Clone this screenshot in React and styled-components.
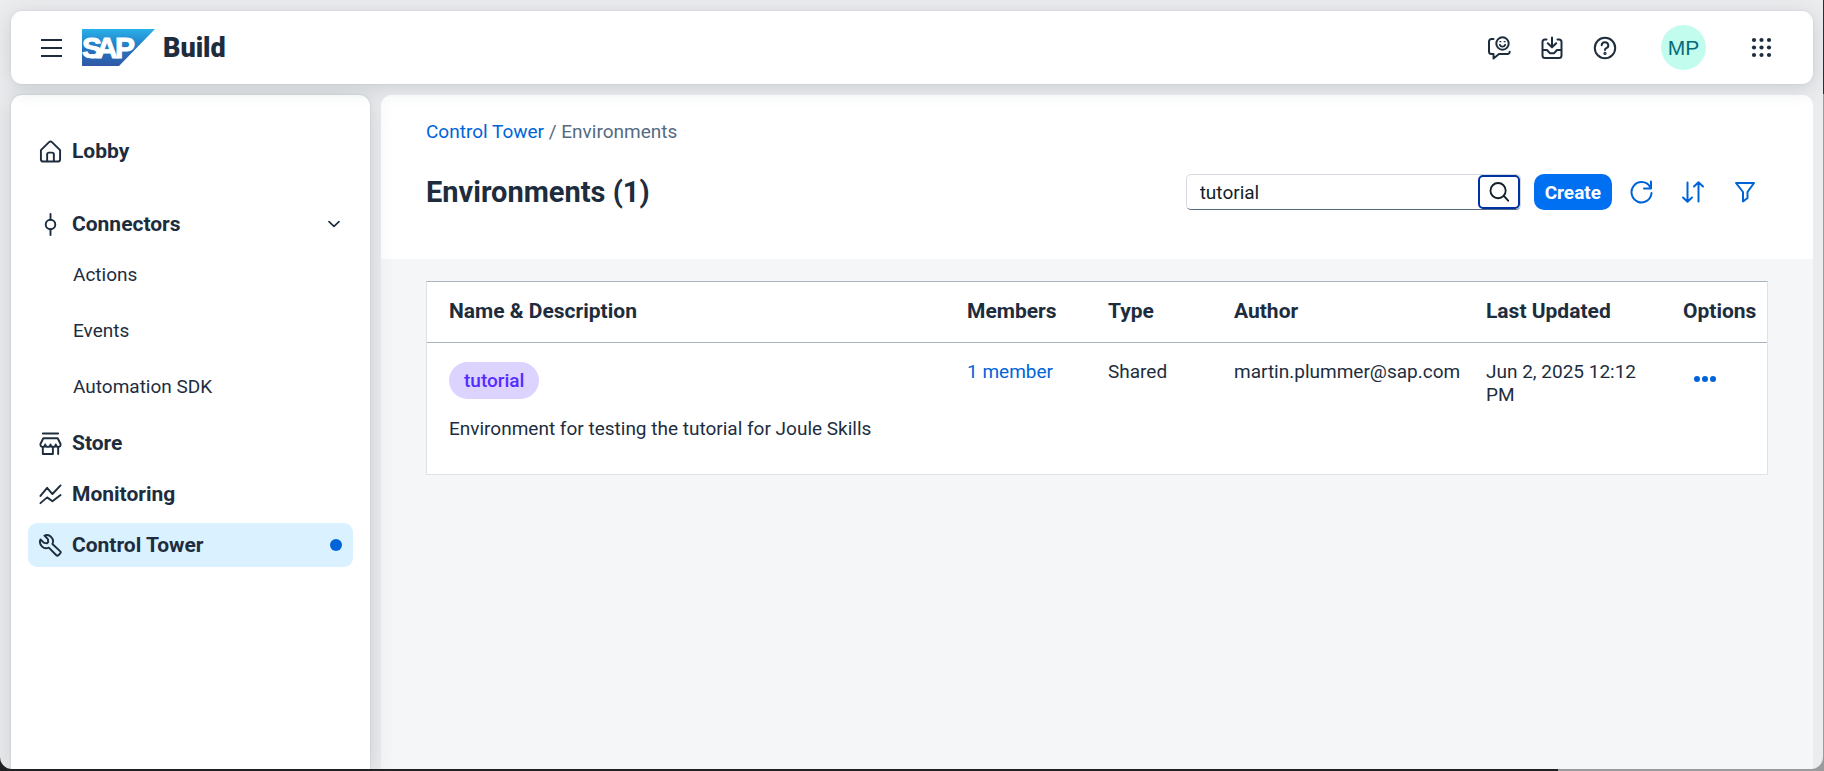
import React from "react";
import styled, { createGlobalStyle, css } from "styled-components";

const ink = "#1d2d3e";
const blue = "#0064d9";

const GlobalStyle = createGlobalStyle`
  *, *::before, *::after { box-sizing: border-box; }
  body {
    margin: 0;
    color: ${ink};
    font-family: Roboto, "Liberation Sans", sans-serif;
    font-size: 19px;
    line-height: 23px;
  }
  h1, p, ul { margin: 0; padding: 0; }
  ul { list-style: none; }
  a { text-decoration: none; }
  button, input { font: inherit; color: inherit; }
`;

const Desktop = styled.div`
  min-height: 100vh;
  display: flex;
  padding: 0 1px 2px 0;
  background:
    linear-gradient(#2c2e2f, #2c2e2f) right top / 1px 94px no-repeat,
    linear-gradient(to right, #1f2122 85.4%, #9a9b9c 85.4%);
`;

const AppWindow = styled.div`
  flex: 1;
  min-width: 0;
  display: flex;
  flex-direction: column;
  gap: 11px;
  padding: 11px 10px 0 11px;
  background: #ebecee;
  border-radius: 0 0 12px 12px;
  overflow: hidden;
`;

const ShellBar = styled.header`
  position: relative;
  z-index: 2;
  display: flex;
  align-items: center;
  height: 73px;
  padding: 0 39px 0 29px;
  background: #fff;
  border-radius: 11px;
  box-shadow: 0 0 2px rgba(34, 53, 72, 0.12), 0 4px 20px rgba(34, 53, 72, 0.16);
`;

const IconButton = styled.button`
  display: flex;
  align-items: center;
  justify-content: center;
  width: 24px;
  height: 24px;
  padding: 0;
  border: 0;
  background: none;
  color: ${({ $accent }) => ($accent ? blue : ink)};
  cursor: pointer;
`;

const Brand = styled.a`
  display: flex;
  align-items: center;
  gap: 8px;
  margin-left: 18px;
  color: ${ink};
  font-size: 27px;
  line-height: 32px;
  font-weight: 900;
`;

const ShellActions = styled.div`
  display: flex;
  align-items: center;
  gap: 29px;
  margin-left: auto;
`;

const Avatar = styled.button`
  width: 45px;
  height: 45px;
  margin: 0 15px;
  padding: 0;
  border: 0;
  border-radius: 50%;
  background: #c2fcee;
  color: #046c7a;
  font-family: "Liberation Sans", sans-serif;
  font-size: 21px;
`;

const Body = styled.div`
  flex: 1;
  display: flex;
  gap: 11px;
`;

const Sidebar = styled.nav`
  position: relative;
  z-index: 1;
  flex: none;
  width: 359px;
  padding: 34px 17px 24px;
  background: #fff;
  border-radius: 11px 11px 0 0;
  box-shadow: 0 0 2px rgba(34, 53, 72, 0.2), 0 4px 24px rgba(34, 53, 72, 0.16);
`;

const NavList = styled.ul`
  display: flex;
  flex-direction: column;
  gap: 7px;
`;

const NavItem = styled.li`
  ${({ $spaced }) => $spaced && css`margin-bottom: 22px;`}
`;

const NavLink = styled.a`
  display: flex;
  align-items: center;
  gap: 10px;
  height: 44px;
  padding: 0 11px;
  border-radius: 9px;
  color: ${ink};
  font-size: 21px;
  font-weight: 700;
  background: ${({ $active }) => ($active ? "#daf1ff" : "transparent")};
  svg { flex: none; }
`;

const NavEnd = styled.span`
  display: flex;
  margin-left: auto;
`;

const ActiveDot = styled.span`
  width: 12px;
  height: 12px;
  border-radius: 50%;
  background: ${blue};
`;

const SubLink = styled.a`
  display: flex;
  align-items: center;
  height: 56px;
  padding-left: 45px;
  color: ${ink};
`;

const Main = styled.main`
  flex: 1;
  min-width: 0;
  background: #f5f6f7;
  border-radius: 11px 11px 0 0;
  overflow: hidden;
`;

const PageHeader = styled.div`
  padding: 25px 56px 49px 45px;
  background: #fff;
`;

const Breadcrumb = styled.nav`
  color: #556b82;
`;

const Link = styled.a`
  color: ${blue};
`;

const TitleRow = styled.div`
  display: flex;
  align-items: center;
  margin-top: 31px;
`;

const Title = styled.h1`
  font-size: 29px;
  line-height: 36px;
  font-weight: 700;
`;

const Toolbar = styled.div`
  display: flex;
  align-items: center;
  gap: 28px;
  margin-left: auto;
`;

const ToolbarMain = styled.form`
  display: flex;
  gap: 13px;
  margin-right: -11px;
`;

const SearchField = styled.div`
  display: flex;
  width: 335px;
  height: 36px;
  border: 1px solid #d5dae0;
  border-bottom-color: #556b82;
  border-radius: 5px;
  background: #fff;
`;

const SearchInput = styled.input`
  flex: 1;
  min-width: 0;
  padding: 0 13px;
  border: 0;
  outline: 0;
  background: none;
  color: #131e29;
`;

const SearchButton = styled.button`
  display: flex;
  align-items: center;
  justify-content: center;
  width: 42px;
  padding: 0;
  border: 2px solid #0032a5;
  border-radius: 5px;
  background: #fff;
  color: #131e29;
`;

const CreateButton = styled.button`
  height: 36px;
  padding: 0 11px;
  border: 0;
  border-radius: 10px;
  background: #0070f2;
  color: #fff;
  font-weight: 700;
`;

const TableArea = styled.section`
  padding: 22px 45px 24px;
`;

const Table = styled.table`
  width: 100%;
  table-layout: fixed;
  border-collapse: separate;
  border-spacing: 0;
  background: #fff;
  border: 1px solid #dfe3e6;
  border-top-color: #a8b3bf;
  text-align: left;
`;

const HeadCell = styled.th`
  width: ${({ $width }) => ($width ? `${$width}px` : "auto")};
  height: 61px;
  padding: 0 0 1px 12px;
  border-bottom: 1px solid #a8b3bf;
  font-size: 21px;
  font-weight: 700;
  &:first-child { padding-left: 22px; }
`;

const Cell = styled.td`
  padding: 17px 12px 34px;
  vertical-align: top;
  &:first-child { padding: 19px 12px 34px 22px; }
`;

const Tag = styled.span`
  display: inline-flex;
  align-items: center;
  height: 37px;
  padding: 0 15px;
  border-radius: 19px;
  background: #dcd3ff;
  color: #552cff;
  font-weight: 500;
`;

const Description = styled.p`
  margin-top: 18px;
`;

const RowMenu = styled(IconButton)`
  margin: 7px 0 0 10px;
`;

const Icon = ({ size = 24, width = 2, children }) => (
  <svg width={size} height={size} viewBox="0 0 24 24" fill="none" stroke="currentColor"
    strokeWidth={width} strokeLinecap="round" strokeLinejoin="round" aria-hidden="true">
    {children}
  </svg>
);

const MenuIcon = () => <Icon><path d="M1 4h21M1 12h21M1 20h21" strokeLinecap="butt" /></Icon>;
const FeedbackIcon = () => (
  <Icon>
    <path d="M6.500 3H4.500a2.500 2.500 0 0 0-2.500 2.500v10a2.500 2.500 0 0 0 2.500 2.500h2v4.500l5.500-4.500h8.500a2.200 2.200 0 0 0 2.200-2.200" />
    <circle cx="15.500" cy="7.500" r="6.200" />
    <path d="M12.800 8.800a2.900 2.900 0 0 0 5.400 0" strokeWidth="1.800" />
    <path d="M13 5.700h.8M17.200 5.700h.8" strokeWidth="1.300" />
  </Icon>
);
const InboxIcon = () => (
  <Icon>
    <path d="M6.500 3.500H5a2.500 2.500 0 0 0-2.500 2.500v13.500A2.500 2.500 0 0 0 5 22h14a2.500 2.500 0 0 0 2.500-2.500V6A2.500 2.500 0 0 0 19 3.500h-1.500" />
    <path d="M12 1.500v9M7.800 7.200l4.200 4 4.200-4M3 14h4l2.800 3.200h4.400L17 14h4" />
  </Icon>
);
const HelpIcon = () => (
  <Icon>
    <circle cx="12" cy="12" r="10.200" />
    <path d="M8.700 9.200a3.300 3.100 0 1 1 4.700 3c-.9.400-1.400 1-1.400 1.700" />
    <circle cx="12" cy="17.400" r=".6" />
  </Icon>
);
const GridIcon = () => (
  <Icon>
    {[4, 11.500, 19].map((y) =>
      [4, 11.500, 19].map((x) => (
        <circle key={`${x}-${y}`} cx={x} cy={y} r="2.100" fill="currentColor" stroke="none" />
      ))
    )}
  </Icon>
);
const HomeIcon = () => (
  <Icon size={23}>
    <path d="M2 10.500 10.500 2.200a2.200 2.200 0 0 1 3 0L22 10.500V20a2.500 2.500 0 0 1-2.500 2.500h-15A2.500 2.500 0 0 1 2 20z" />
    <path d="M8.500 22v-7a1.800 1.800 0 0 1 1.800-1.800h3.400a1.800 1.800 0 0 1 1.800 1.800v7" />
  </Icon>
);
const ConnectorIcon = () => (
  <Icon size={23}><circle cx="12" cy="12" r="5" /><path d="M12 1v6M12 17v6" /></Icon>
);
const ChevronIcon = () => <Icon size={16} width={2.5}><path d="m4.500 8.500 7.500 7 7.500-7" /></Icon>;
const StoreIcon = () => (
  <Icon size={23}>
    <path d="M4 1.500h16M4.500 6.500h15l3 6c.3 1.800-.8 3-2.300 3-1.500 0-2.700-1-2.700-2.500 0 1.500-1.200 2.500-2.700 2.500S12 14.500 12 13c0 1.500-1.300 2.500-2.800 2.500S6.500 14.500 6.500 13c0 1.500-1.200 2.500-2.700 2.500-1.500 0-2.600-1.200-2.300-3z" />
    <path d="M4 15.500V23h10.500v-7.500M20 15.500V23" />
  </Icon>
);
const MonitoringIcon = () => (
  <Icon size={23}><path d="m1.500 13.500 7-8.500 5.500 6.500L22.500 2.500M1.500 21l7-6 5.500 4 8.500-6.500" /></Icon>
);
const WrenchIcon = () => (
  <Icon size={23}>
    <path d="m10.200 14.200 7.900 8a1.500 1.500 0 0 0 2.100 0l2-2a1.500 1.500 0 0 0 0-2.100L14 10.400A6.500 6.500 0 0 0 5.700 1.600l3.600 3.700.3 3-1.300 1.300-3-.3L1.600 5.700A6.500 6.500 0 0 0 10.200 14.200z" />
  </Icon>
);
const SearchIcon = () => <Icon size={22}><circle cx="11" cy="10.500" r="8.300" /><path d="m17.500 16.500 4.500 5" /></Icon>;
const RefreshIcon = () => (
  <Icon><path d="M20.800 6.500A10 10.200 0 1 0 22.500 13M22 1.500v7h-7" /></Icon>
);
const SortIcon = () => (
  <Icon><path d="M6.500 2.500v19M2 17.500l4.500 4.300 4.500-4.300M17.500 21.500v-19M13 6.500l4.500-4.300L22 6.500" /></Icon>
);
const FilterIcon = () => (
  <Icon><path d="M3 3h18l-6.500 9v6L10 21.500V12z" /></Icon>
);
const MoreIcon = () => (
  <Icon>
    {[4, 12, 20].map((x) => <circle key={x} cx={x} cy="12" r="3" fill="currentColor" stroke="none" />)}
  </Icon>
);

const SapLogo = () => (
  <svg width="73" height="37" viewBox="0 0 73 37" role="img" aria-label="SAP">
    <defs>
      <linearGradient id="sapBlue" x1="0" y1="0" x2="0" y2="1">
        <stop offset="0" stopColor="#29b1e8" />
        <stop offset="0.5" stopColor="#2378c3" />
        <stop offset="1" stopColor="#3157a5" />
      </linearGradient>
    </defs>
    <path d="M0 0h73L37 37H0z" fill="url(#sapBlue)" />
    <text x="0 14 33" y="29" fill="#fff" stroke="#fff" fontFamily="Liberation Sans, sans-serif"
      fontWeight="700" fontSize="30">SAP</text>
  </svg>
);

const subLinks = ["Actions", "Events", "Automation SDK"];

export default function App() {
  return (
    <>
      <GlobalStyle />
      <Desktop>
        <AppWindow>
          <ShellBar>
            <IconButton aria-label="Menu"><MenuIcon /></IconButton>
            <Brand href="#home"><SapLogo />Build</Brand>
            <ShellActions>
              <IconButton aria-label="Feedback"><FeedbackIcon /></IconButton>
              <IconButton aria-label="Inbox"><InboxIcon /></IconButton>
              <IconButton aria-label="Help"><HelpIcon /></IconButton>
              <Avatar aria-label="Profile">MP</Avatar>
              <IconButton aria-label="Products"><GridIcon /></IconButton>
            </ShellActions>
          </ShellBar>
          <Body>
            <Sidebar aria-label="Main">
              <NavList>
                <NavItem $spaced><NavLink href="#lobby"><HomeIcon />Lobby</NavLink></NavItem>
                <NavItem>
                  <NavLink href="#connectors">
                    <ConnectorIcon />Connectors<NavEnd><ChevronIcon /></NavEnd>
                  </NavLink>
                  <ul>
                    {subLinks.map((name) => (
                      <li key={name}><SubLink href="#connectors">{name}</SubLink></li>
                    ))}
                  </ul>
                </NavItem>
                <NavItem><NavLink href="#store"><StoreIcon />Store</NavLink></NavItem>
                <NavItem><NavLink href="#monitoring"><MonitoringIcon />Monitoring</NavLink></NavItem>
                <NavItem>
                  <NavLink href="#control-tower" $active aria-current="page">
                    <WrenchIcon />Control Tower<NavEnd><ActiveDot /></NavEnd>
                  </NavLink>
                </NavItem>
              </NavList>
            </Sidebar>
            <Main>
              <PageHeader>
                <Breadcrumb aria-label="Breadcrumb">
                  <Link href="#control-tower">Control Tower</Link> / Environments
                </Breadcrumb>
                <TitleRow>
                  <Title>Environments (1)</Title>
                  <Toolbar>
                    <ToolbarMain onSubmit={(e) => e.preventDefault()}>
                      <SearchField>
                        <SearchInput aria-label="Search" defaultValue="tutorial" />
                        <SearchButton aria-label="Search"><SearchIcon /></SearchButton>
                      </SearchField>
                      <CreateButton type="button">Create</CreateButton>
                    </ToolbarMain>
                    <IconButton $accent aria-label="Refresh"><RefreshIcon /></IconButton>
                    <IconButton $accent aria-label="Sort"><SortIcon /></IconButton>
                    <IconButton $accent aria-label="Filter"><FilterIcon /></IconButton>
                  </Toolbar>
                </TitleRow>
              </PageHeader>
              <TableArea>
                <Table>
                  <thead>
                    <tr>
                      <HeadCell>Name &amp; Description</HeadCell>
                      <HeadCell $width={141}>Members</HeadCell>
                      <HeadCell $width={126}>Type</HeadCell>
                      <HeadCell $width={252}>Author</HeadCell>
                      <HeadCell $width={197}>Last Updated</HeadCell>
                      <HeadCell $width={96}>Options</HeadCell>
                    </tr>
                  </thead>
                  <tbody>
                    <tr>
                      <Cell>
                        <Tag>tutorial</Tag>
                        <Description>Environment for testing the tutorial for Joule Skills</Description>
                      </Cell>
                      <Cell><Link href="#members">1 member</Link></Cell>
                      <Cell>Shared</Cell>
                      <Cell>martin.plummer@sap.com</Cell>
                      <Cell>Jun 2, 2025 12:12 PM</Cell>
                      <Cell><RowMenu $accent aria-label="Row options"><MoreIcon /></RowMenu></Cell>
                    </tr>
                  </tbody>
                </Table>
              </TableArea>
            </Main>
          </Body>
        </AppWindow>
      </Desktop>
    </>
  );
}
